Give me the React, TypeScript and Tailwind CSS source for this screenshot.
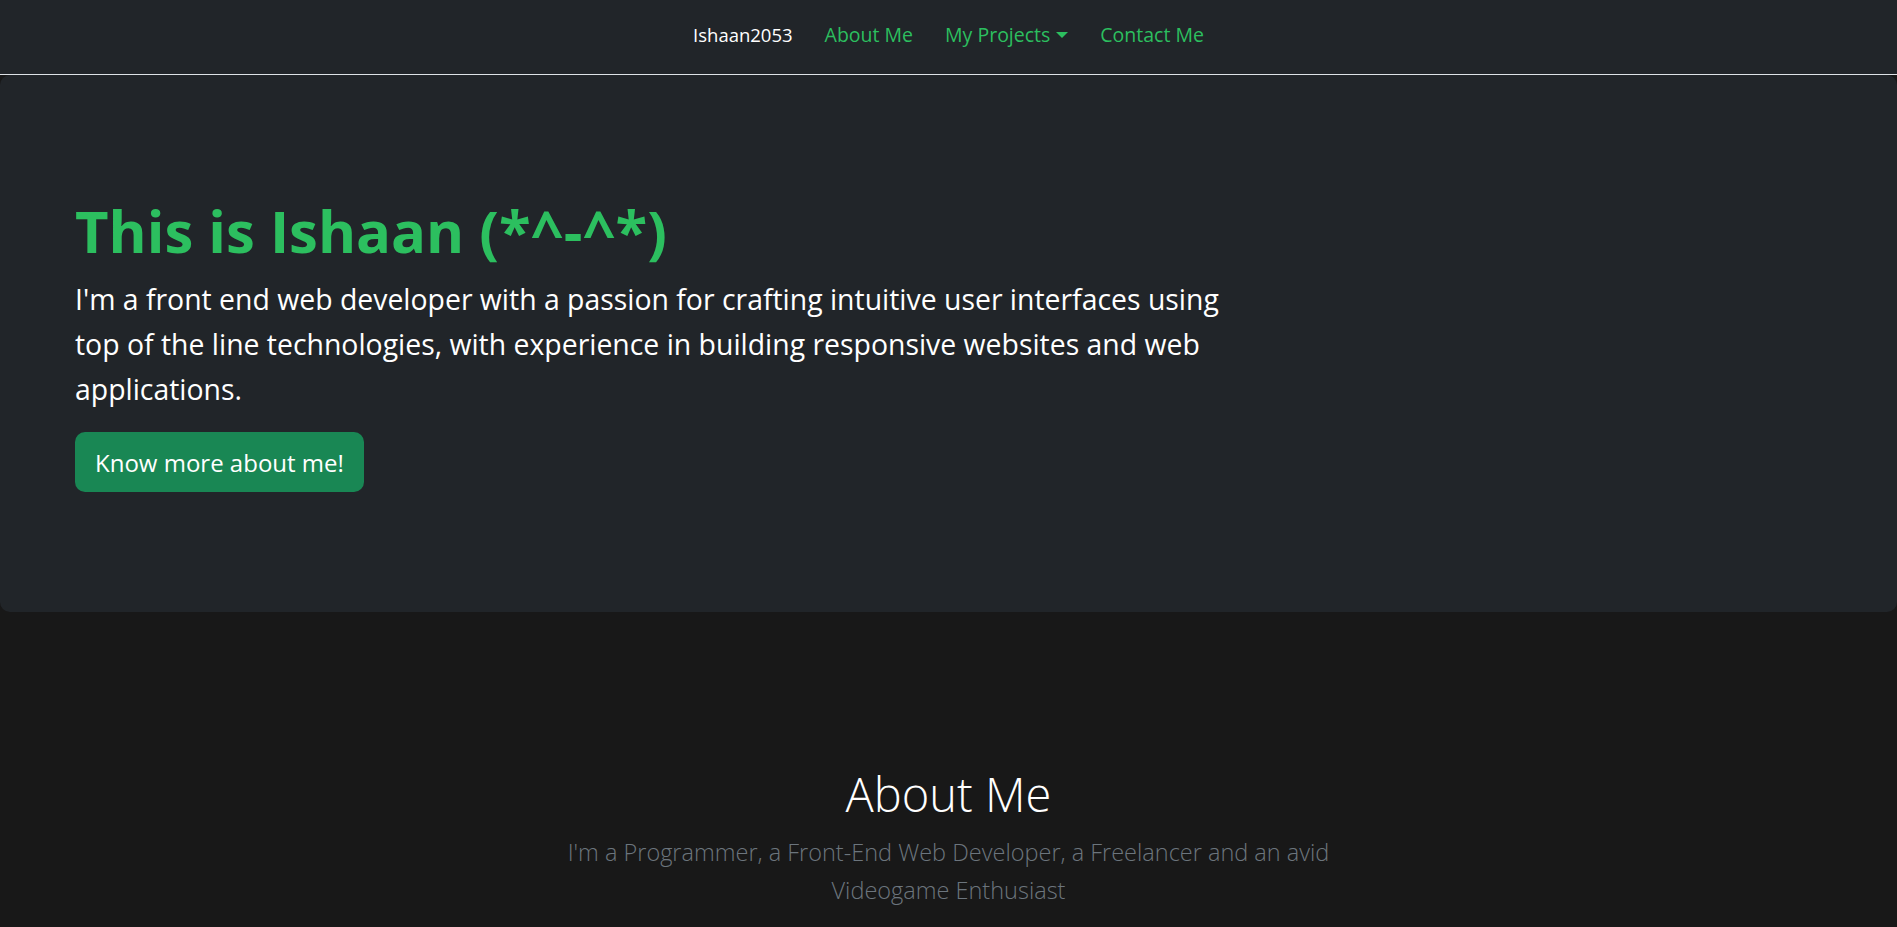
const font = { fontFamily: '"Open Sans", "Noto Sans", sans-serif' };

function Navbar() {
  return (
    <nav className="h-[75px] pb-[5px] bg-[#212529] border-b border-[#dee2e6] flex items-center justify-center">
      <div className="flex items-center text-[19.5px] leading-[30px]">
        <a href="#" className="text-white text-[18.5px] mr-[32px]">
          Ishaan2053
        </a>
        <a href="#" className="text-[#2cbf5f] mr-[32px]">
          About Me
        </a>
        <a href="#" className="text-[#2cbf5f] mr-[32px] flex items-center">
          My Projects
          <span className="ml-[6px] w-0 h-0 border-t-[6px] border-t-[#2cbf5f] border-x-[6px] border-x-transparent" />
        </a>
        <a href="#" className="text-[#2cbf5f]">
          Contact Me
        </a>
      </div>
    </nav>
  );
}

function Hero() {
  return (
    <section className="bg-[#212529] rounded-[10px] px-[75px] py-[120px]">
      <h1 className="text-[58px] leading-[72px] font-bold text-[#2cbf5f] mb-[10px]">
        This is Ishaan (*^-^*)
      </h1>
      <p className="w-[1165px] text-[28.4px] leading-[45px] text-white mb-[20px]">
        I'm a front end web developer with a passion for crafting intuitive user
        interfaces using top of the line technologies, with experience in
        building responsive websites and web applications.
      </p>
      <button
        type="button"
        className="h-[60px] px-[20px] rounded-[10px] bg-[#198754] text-white text-[24px] leading-[37px]"
      >
        Know more about me!
      </button>
    </section>
  );
}

function About() {
  return (
    <section className="pt-[152px] pb-[60px] text-center">
      <h2 className="text-[47px] leading-[60px] font-light text-white mb-[10px]">
        About Me
      </h2>
      <p className="w-[795px] mx-auto text-[23.5px] leading-[37.5px] font-light text-[#6c757d]">
        I'm a Programmer, a Front-End Web Developer, a Freelancer and an avid
        Videogame Enthusiast
      </p>
    </section>
  );
}

export default function App() {
  return (
    <div className="min-h-screen bg-[#181818]" style={font}>
      <Navbar />
      <Hero />
      <About />
    </div>
  );
}
